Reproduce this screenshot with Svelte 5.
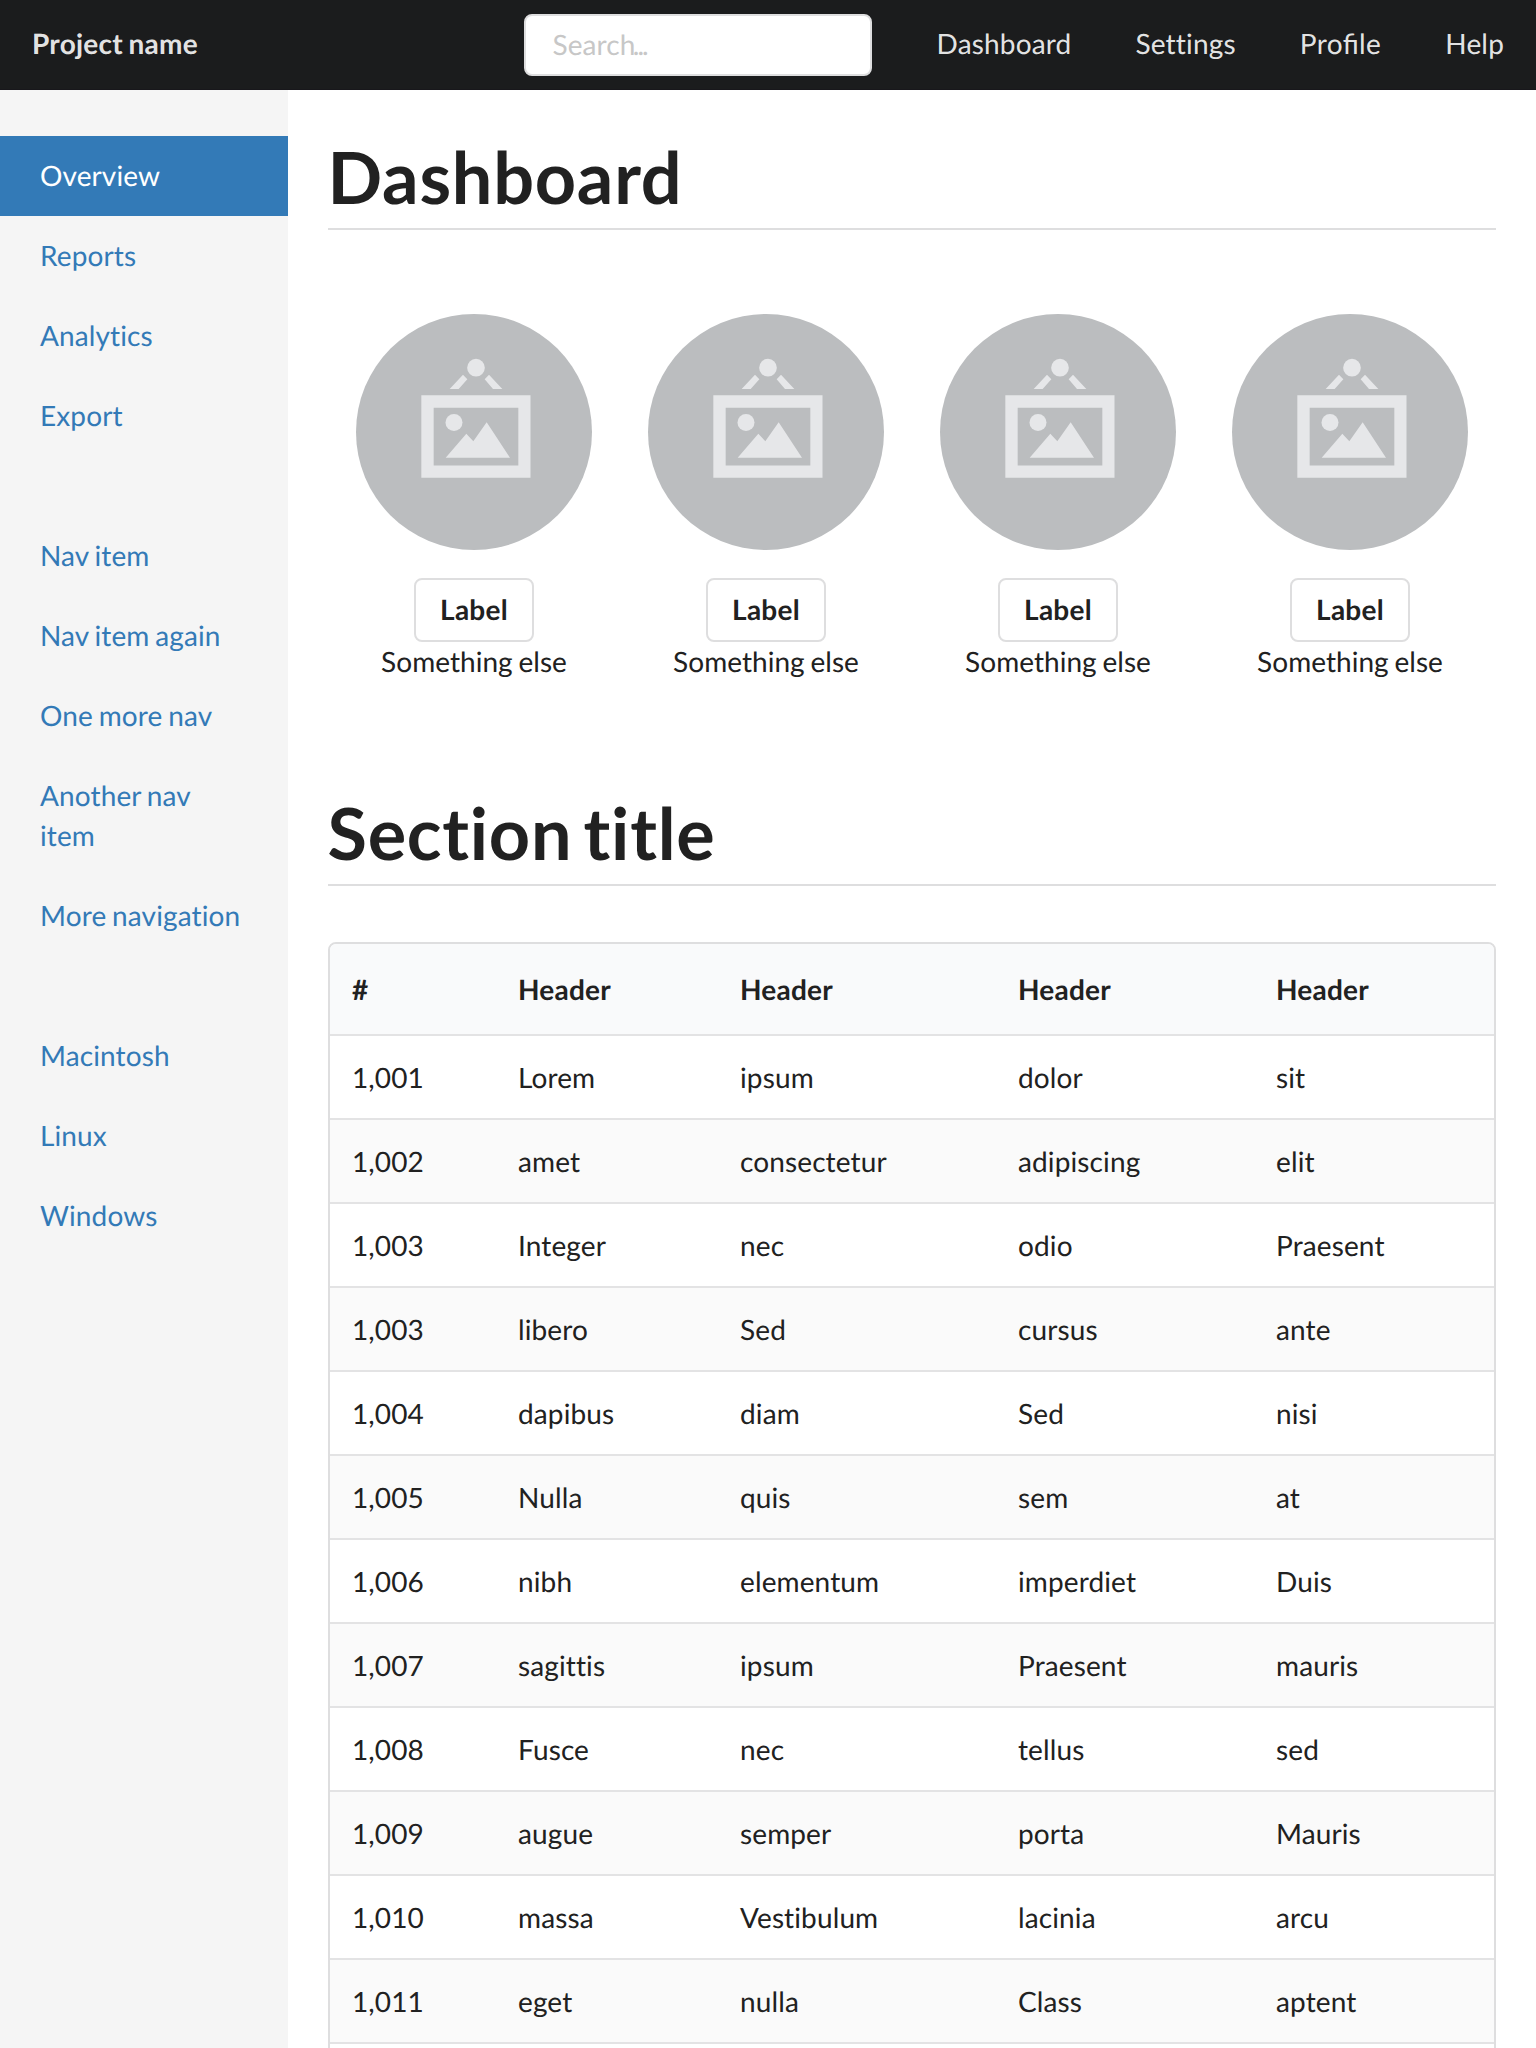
<script>
  const links = ['Dashboard', 'Settings', 'Profile', 'Help'];
  const groups = [
    ['Overview', 'Reports', 'Analytics', 'Export'],
    ['Nav item', 'Nav item again', 'One more nav', 'Another nav item', 'More navigation'],
    ['Macintosh', 'Linux', 'Windows'],
  ];
  const cards = [1, 2, 3, 4];
  const rows = [
    ['1,001', 'Lorem', 'ipsum', 'dolor', 'sit'],
    ['1,002', 'amet', 'consectetur', 'adipiscing', 'elit'],
    ['1,003', 'Integer', 'nec', 'odio', 'Praesent'],
    ['1,003', 'libero', 'Sed', 'cursus', 'ante'],
    ['1,004', 'dapibus', 'diam', 'Sed', 'nisi'],
    ['1,005', 'Nulla', 'quis', 'sem', 'at'],
    ['1,006', 'nibh', 'elementum', 'imperdiet', 'Duis'],
    ['1,007', 'sagittis', 'ipsum', 'Praesent', 'mauris'],
    ['1,008', 'Fusce', 'nec', 'tellus', 'sed'],
    ['1,009', 'augue', 'semper', 'porta', 'Mauris'],
    ['1,010', 'massa', 'Vestibulum', 'lacinia', 'arcu'],
    ['1,011', 'eget', 'nulla', 'Class', 'aptent'],
  ];
</script>

<div class="page">
  <header class="topbar">
    <a class="brand" href="#home">Project name</a>
    <div class="right">
      <div class="search" role="searchbox" aria-label="Search" tabindex="0">Search<span class="dots">...</span></div>
      <nav class="links">
        {#each links as link}
          <a href="#{link}" class:ligated={link === 'Profile'}>{link}</a>
        {/each}
      </nav>
    </div>
  </header>

  <div class="body">
    <aside class="sidebar">
      {#each groups as group}
        <nav class="group">
          {#each group as item}
            <a href="#{item}" class:active={item === 'Overview'}>{item}</a>
          {/each}
        </nav>
      {/each}
    </aside>

    <main class="content">
      <h1>Dashboard</h1>
      <section class="cards">
        {#each cards as card (card)}
          <div class="card">
            <svg class="picture" viewBox="48 42 708 708" aria-hidden="true">
              <circle cx="402" cy="396" r="354" fill="#bbbdbf" />
              <g fill="#e6e7e9">
                <circle cx="408" cy="203" r="26.5" />
                <path d="M369 224L382 238L356 267H329ZM447 224L487 267H459L434 238Z" />
                <path fill-rule="evenodd" d="M244 285.500H571.500V533H244ZM281 323V496.500H535V323Z" />
                <circle cx="342" cy="367.500" r="25.500" />
                <path d="M317 473L379 401L400 424L440 367L510 473Z" />
              </g>
            </svg>
            <span class="label">Label</span>
            <span class="caption">Something else</span>
          </div>
        {/each}
      </section>

      <h1>Section title</h1>
      <div class="table">
        <div class="row head">
          <span>#</span>
          <span>Header</span>
          <span>Header</span>
          <span>Header</span>
          <span>Header</span>
        </div>
        {#each rows as row}
          <div class="row">
            {#each row as cell}
              <span>{cell}</span>
            {/each}
          </div>
        {/each}
        <div class="row"></div>
      </div>
    </main>
  </div>
</div>

<style>
  :global(body) {
    margin: 0;
    background: #fff;
  }
  .page {
    height: 2048px;
    overflow: hidden;
    display: flex;
    flex-direction: column;
    font-family: Lato, 'Liberation Sans', sans-serif;
    font-size: 28px;
    line-height: 40px;
    letter-spacing: 0.12px;
    word-spacing: -1.500px;
    text-rendering: geometricPrecision;
    color: #212121;
  }
  .page * {
    box-sizing: border-box;
  }
  a {
    text-decoration: none;
  }
  .topbar {
    flex: none;
    height: 90px;
    display: flex;
    align-items: center;
    justify-content: space-between;
    padding-left: 32px;
    background: #1b1c1d;
    border-bottom: 1px solid #18171b;
  }
  .topbar a {
    color: rgba(255, 255, 255, 0.9);
    line-height: 34px;
  }
  .topbar .brand {
    font-weight: 700;
    letter-spacing: 0.25px;
    padding-bottom: 3px;
  }
  .right,
  .links {
    display: flex;
    align-items: center;
  }
  .right {
    gap: 32.600px;
  }
  .links a {
    padding: 0 32px 3px;
    letter-spacing: 0.17px;
  }
  .links .ligated {
    font-feature-settings: 'liga' 1;
    letter-spacing: 0.4px;
  }
  .search {
    width: 348px;
    height: 62px;
    padding: 0 26.500px;
    border: 2px solid #dededf;
    border-radius: 8px;
    background: #fff;
    color: #c7c7c7;
    line-height: 56px;
  }
  .dots {
    margin-left: -2.800px;
    letter-spacing: -2px;
  }
  .body {
    flex: 1;
    min-height: 0;
    display: flex;
  }
  .sidebar {
    flex: none;
    width: 288px;
    padding-top: 46px;
    background: #f5f5f5;
    display: flex;
    flex-direction: column;
    gap: 60px;
  }
  .group {
    display: flex;
    flex-direction: column;
  }
  .group a {
    padding: 19px 40px 21px;
    color: #337ab7;
  }
  .group a.active {
    background: #337ab7;
    color: #fff;
  }
  .content {
    flex: 1;
    min-width: 0;
    padding: 40px 40px 0;
  }
  h1 {
    margin: 0;
    height: 100px;
    padding-top: 1px;
    text-indent: -0.500px;
    font-size: 72px;
    line-height: 92px;
    font-weight: 700;
    letter-spacing: 0.75px;
    word-spacing: -7px;
    border-bottom: 2px solid #dededf;
  }
  .cards {
    height: 556px;
    padding-top: 84px;
    display: grid;
    grid-template-columns: repeat(4, 1fr);
  }
  .card {
    display: flex;
    flex-direction: column;
    align-items: center;
  }
  .picture {
    width: 236px;
    height: 236px;
    flex: none;
  }
  .label {
    margin-top: 28px;
    width: 120px;
    height: 64px;
    border: 2px solid #dededf;
    border-radius: 8px;
    font-weight: 700;
    letter-spacing: 0.25px;
    line-height: 58px;
    text-align: center;
  }
  .caption {
    line-height: 39px;
    letter-spacing: 0.04px;
  }
  .table {
    margin-top: 56px;
    border: 2px solid #dededf;
    border-radius: 8px;
    overflow: hidden;
  }
  .row {
    height: 84px;
    display: grid;
    grid-template-columns: 166px 222px 278px 258px 1fr;
    align-items: center;
    border-bottom: 2px solid #e3e3e4;
  }
  .row:nth-child(odd) {
    background: #fafafa;
  }
  .row span {
    padding-left: 22px;
  }
  .row.head {
    height: 92px;
    background: #f9fafb;
    font-weight: 700;
    letter-spacing: 0.22px;
  }
</style>
